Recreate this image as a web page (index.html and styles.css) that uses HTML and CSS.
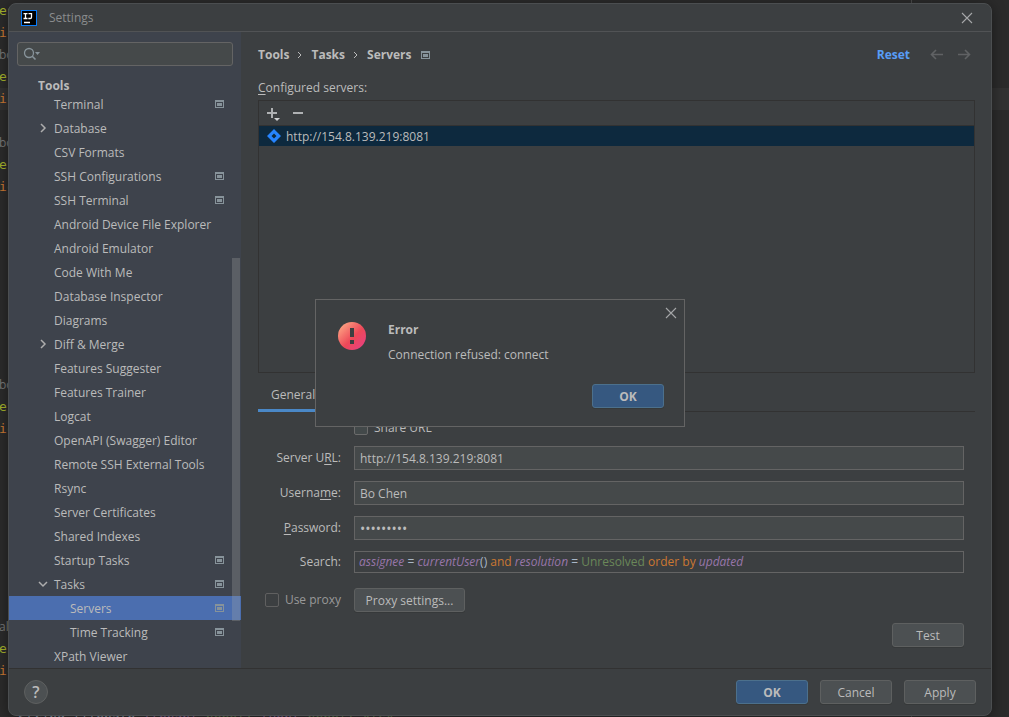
FILE: index.html
```html
<!DOCTYPE html>
<html lang="en">
<head>
<meta charset="utf-8">
<title>Settings</title>
<link rel="stylesheet" href="styles.css">
</head>
<body>
<svg width="0" height="0" class="defs" aria-hidden="true">
  <symbol id="project" viewBox="0 0 9 8"><path fill-rule="evenodd" fill="#87939a" d="M0 0h9v8H0zM1 2v5h7V2z"/><path fill="#87939a" d="M2 3h5v3H2z"/></symbol>
  <symbol id="right" viewBox="0 0 8 10"><path d="M2 1l4 4-4 4" fill="none" stroke="#adadad" stroke-width="1.5"/></symbol>
  <symbol id="down" viewBox="0 0 10 8"><path d="M1 2l4 4 4-4" fill="none" stroke="#adadad" stroke-width="1.5"/></symbol>
  <symbol id="close" viewBox="0 0 12 12"><path d="M1 1l10 10M11 1L1 11" fill="none" stroke="#a5a7a8" stroke-width="1.1"/></symbol>
</svg>

<div class="editor" aria-hidden="true">
  <div class="caret-line"></div>
  <pre class="gutter"><span class="y">es</span>
<span class="o">ic</span>
<span class="g">bo</span>
<span class="y">es</span>
<span class="o">ic</span>

<span class="g">bo</span>
<span class="y">es</span>
<span class="o">ic</span>








<span class="g">bo</span>
<span class="y">es</span>
<span class="o">ic</span>








<span class="g">ali</span>
<span class="y">es</span>
<span class="o">ic</span></pre>
  <div class="margin-line"></div>
  <pre class="last-line">String filepath=<span class="p">{tenant</span><span class="s">_nebel}</span>.<span class="p">tuent</span><span class="s">_nebel}.xlsx</span></pre>
</div>

<main class="window">
  <header class="titlebar">
    <svg class="logo" viewBox="0 0 16 16" aria-hidden="true"><rect x=".5" y=".5" width="15" height="15" fill="#000" stroke="#087cfa"/><path d="M2.500 3.600h4M4.500 3.600v5M2.500 8.500h4M7.500 3.600h3v3.600q0 1.300-1.300 1.300H7.300M3 12.500h6" fill="none" stroke="#fff" stroke-width="1.300"/></svg>
    <h1>Settings</h1>
    <button class="icon-button" aria-label="Close settings"><svg width="12" height="12"><use href="#close"/></svg></button>
  </header>

  <div class="content">
    <aside class="sidebar">
      <label class="search">
        <svg width="18" height="14" viewBox="0 0 18 14" aria-hidden="true"><circle cx="6" cy="6" r="4.500" fill="none" stroke="#87939a" stroke-width="1.300"/><path d="M9 9l3.500 3.500" stroke="#87939a" stroke-width="1.600"/><path d="M12 5h5l-2.500 3z" fill="#87939a"/></svg>
        <input type="search" aria-label="Search settings">
      </label>
      <nav class="tree" aria-label="Settings sections">
        <h2>Tools</h2>
        <ul>
          <li><a href="#">Terminal</a><svg class="mark"><use href="#project"/></svg></li>
          <li><svg class="arrow"><use href="#right" width="8" height="10" x="2"/></svg><a href="#">Database</a></li>
          <li><a href="#">CSV Formats</a></li>
          <li><a href="#">SSH Configurations</a><svg class="mark"><use href="#project"/></svg></li>
          <li><a href="#">SSH Terminal</a><svg class="mark"><use href="#project"/></svg></li>
          <li><a href="#">Android Device File Explorer</a></li>
          <li><a href="#">Android Emulator</a></li>
          <li><a href="#">Code With Me</a></li>
          <li><a href="#">Database Inspector</a></li>
          <li><a href="#">Diagrams</a></li>
          <li><svg class="arrow"><use href="#right" width="8" height="10" x="2"/></svg><a href="#">Diff &amp; Merge</a></li>
          <li><a href="#">Features Suggester</a></li>
          <li><a href="#">Features Trainer</a></li>
          <li><a href="#">Logcat</a></li>
          <li><a href="#">OpenAPI (Swagger) Editor</a></li>
          <li><a href="#">Remote SSH External Tools</a></li>
          <li><a href="#">Rsync</a></li>
          <li><a href="#">Server Certificates</a></li>
          <li><a href="#">Shared Indexes</a></li>
          <li><a href="#">Startup Tasks</a><svg class="mark"><use href="#project"/></svg></li>
          <li><svg class="arrow"><use href="#down" width="10" height="8" x="1" y="1"/></svg><a href="#">Tasks</a><svg class="mark"><use href="#project"/></svg></li>
          <li class="child selected"><a href="#" aria-current="page">Servers</a><svg class="mark"><use href="#project"/></svg></li>
          <li class="child"><a href="#">Time Tracking</a><svg class="mark"><use href="#project"/></svg></li>
          <li><a href="#">XPath Viewer</a></li>
        </ul>
      </nav>
      <div class="thumb"></div>
    </aside>

    <section class="page">
      <div class="crumbs">
        <b>Tools</b><svg width="6" height="9"><path d="M1 1l3 3-3 3" fill="none" stroke="#bbb"/></svg>
        <b>Tasks</b><svg width="6" height="9"><path d="M1 1l3 3-3 3" fill="none" stroke="#bbb"/></svg>
        <b>Servers</b><svg class="crumb-mark" width="9" height="8"><use href="#project"/></svg>
        <a class="reset" href="#">Reset</a>
        <button class="icon-button" aria-label="Back"><svg width="14" height="12"><path d="M6 1L1.500 5.500 6 10M1.500 5.500H13" fill="none" stroke="#606264" stroke-width="1.600"/></svg></button>
        <button class="icon-button" aria-label="Forward"><svg width="14" height="12"><path d="M8 1l4.500 4.500L8 10M12.500 5.500H1" fill="none" stroke="#606264" stroke-width="1.600"/></svg></button>
      </div>
      <h2 class="list-title"><u>C</u>onfigured servers:</h2>
      <div class="list">
        <div class="toolbar">
          <button class="icon-button" aria-label="Add"><svg width="14" height="14"><path d="M5 1v10M0 6h10" stroke="#afb1b3" stroke-width="2"/><path d="M7 11h6l-3 3z" fill="#d0d2d4"/></svg></button>
          <button class="icon-button" aria-label="Remove"><svg width="10" height="12"><path d="M0 5h10" stroke="#afb1b3" stroke-width="2"/></svg></button>
        </div>
        <ul>
          <li><svg width="14" height="14" viewBox="0 0 14 14" aria-hidden="true"><path fill="#2684ff" fill-rule="evenodd" d="M7 0l7 7-7 7-7-7zM7 4.500L4.500 7 7 9.500 9.500 7z"/></svg><span>http://154.8.139.219:8081</span></li>
        </ul>
      </div>
      <div class="tabs" role="tablist"><button role="tab" aria-selected="true">General</button></div>
      <form class="form">
        <label class="check share"><input type="checkbox">Share URL</label>
        <label for="url">Server U<u>R</u>L:</label><input id="url" type="text" value="http://154.8.139.219:8081">
        <label for="user">Userna<u>m</u>e:</label><input id="user" type="text" value="Bo Chen">
        <label for="pass"><u>P</u>assword:</label><input id="pass" type="password" value="password1">
        <span class="label" id="query-label">Search:</span>
        <div class="query" role="textbox" contenteditable="true" spellcheck="false" aria-labelledby="query-label"><i>assignee</i> = <i>currentUser</i>() <span class="keyword">and</span> <i>resolution</i> = <span class="string">Unresolved</span> <span class="keyword">order by</span> <i>updated</i></div>
        <label class="check proxy"><input type="checkbox" disabled>Use proxy</label>
        <button type="button" class="button proxy-button">Proxy settings...</button>
        <button type="button" class="button test">Test</button>
      </form>
    </section>
  </div>

  <footer>
    <button class="help" aria-label="Help">?</button>
    <button class="button primary">OK</button>
    <button class="button">Cancel</button>
    <button class="button">Apply</button>
  </footer>

  <div class="overlay">
    <section class="error" role="alertdialog" aria-labelledby="error-title">
      <svg width="28" height="28" viewBox="0 0 28 28" aria-hidden="true"><defs><linearGradient id="red" x1="0" y1="0" x2="1" y2="1"><stop offset=".1" stop-color="#fda383"/><stop offset=".55" stop-color="#ed4858"/><stop offset=".9" stop-color="#e8417e"/></linearGradient></defs><circle cx="14" cy="14" r="14" fill="url(#red)"/><path d="M12 6h4v9h-4zM12 18h4v4h-4z" fill="#3c3f41"/></svg>
      <div class="message">
        <h2 id="error-title">Error</h2>
        <p>Connection refused: connect</p>
      </div>
      <button class="icon-button dismiss" aria-label="Close error"><svg width="12" height="12"><use href="#close"/></svg></button>
      <button class="button primary">OK</button>
    </section>
  </div>
</main>
</body>
</html>
```
FILE: styles.css
```css
* { box-sizing: border-box; }
body {
  margin: 0;
  height: 100vh;
  overflow: hidden;
  position: relative;
  background: #2b2b2b;
  color: #bbbbbb;
  font: 12px/16px "Open Sans", "Noto Sans", sans-serif;
}
h1, h2, p, ul, pre { margin: 0; padding: 0; font-size: 12px; }
ul { list-style: none; }
a { color: inherit; text-decoration: none; }
svg { display: block; flex: none; }
button, input { font: inherit; color: inherit; }
u { text-underline-offset: 2px; }
.defs { position: absolute; }

/* Code behind the window */
.editor { position: absolute; inset: 0; overflow: hidden; }
.editor pre { font: 13px/22px "DejaVu Sans Mono", monospace; position: absolute; }
.gutter { top: 0; left: -1px; }
.gutter .y { color: #a5b12c; }
.gutter .o { color: #cc7832; }
.gutter .g { color: #787878; font: 12px/22px "Open Sans", sans-serif; }
.caret-line { position: absolute; top: 88px; left: 0; right: 0; height: 22px; background: #323232; }
.margin-line { position: absolute; top: 0; left: 911px; width: 1px; height: 100%; background: #4b4b4b; }
.editor .last-line { top: 707px; left: 18px; color: #8797a8; }
.last-line .p { color: #806090; }
.last-line .s { color: #587048; }

.window {
  position: relative;
  display: flex;
  flex-direction: column;
  height: calc(100vh - 4px);
  margin: 0 17px 0 8px;
  top: 3px;
  background: #3c3f41;
  border: 1px solid #4b4e50;
  border-radius: 8px;
  box-shadow: 0 2px 14px #0006;
  overflow: hidden;
}
.icon-button { display: flex; padding: 0; border: 0; background: none; }
.titlebar {
  display: flex;
  align-items: center;
  height: 28px;
  padding: 0 18px 0 12px;
  border-bottom: 1px solid #515355;
}
.logo { width: 16px; height: 16px; }
.titlebar h1 { flex: 1; margin-left: 12px; color: #8a8c8d; font-weight: 400; }
.content { flex: 1; display: flex; min-height: 0; }

.sidebar {
  position: relative;
  width: 232px;
  flex: none;
  padding-top: 10px;
  background: #3e434c;
  overflow: hidden;
}
.search {
  display: flex;
  align-items: center;
  height: 24px;
  margin: 0 8px;
  padding-left: 5px;
  background: #45494a;
  border: 1px solid #646464;
  border-radius: 3px;
}
.search input { flex: 1; min-width: 0; border: 0; background: none; outline: 0; }
.tree { margin-top: 8px; }
.tree h2 { height: 18px; line-height: 24px; padding-left: 29px; }
.tree li { display: flex; align-items: center; height: 24px; padding: 0 17px 0 45px; }
.tree li.child { padding-left: 61px; }
.tree a { flex: 1; padding-top: 2px; }
.tree .mark { width: 9px; height: 8px; }
.tree .arrow { width: 13px; height: 10px; margin-left: -17px; margin-right: 4px; }
.tree .selected { background: #4b6eaf; }
.thumb { position: absolute; right: 1px; top: 226px; bottom: 47px; width: 8px; background: #a6a6a648; }

.page { flex: 1; min-width: 0; display: flex; flex-direction: column; padding: 14px 16px 21px 17px; }
.crumbs { display: flex; align-items: center; gap: 8px; height: 18px; }
.crumb-mark { margin-left: 1px; }
.crumbs b { font-weight: 700; }
.reset { margin-left: auto; margin-right: 12px; color: #589df6; font-weight: 700; }
.crumbs .icon-button + .icon-button { margin-left: 5px; }
.crumbs .icon-button:last-child { margin-right: 4px; }
.list-title { margin: 16px 0 4px; font-weight: 400; }
.list { flex: 1; border: 1px solid #323232; }
.toolbar { display: flex; align-items: center; gap: 12px; height: 25px; padding: 2px 0 0 8px; border-bottom: 1px solid #323232; }
.list li { display: flex; align-items: center; gap: 5px; height: 20px; padding-left: 8px; background: #0d293e; }
.list span { padding-top: 2px; }

.tabs { display: flex; height: 39px; border-bottom: 1px solid #323232; }
.tabs button { height: 39px; padding: 7px 13px 0; border: 0; border-bottom: 3px solid #4a88c7; background: none; }
.form {
  display: grid;
  grid-template-columns: 83px 1fr;
  grid-template-rows: 15px 24px 24px 24px 22px 28px 24px;
  gap: 11px 13px;
  align-items: center;
  margin-right: 11px;
  padding-top: 8px;
}
.form > label, .form .label { text-align: right; }
.form > input, .query {
  width: 100%;
  height: 24px;
  padding: 1px 5px 0;
  border: 1px solid #646464;
  background: #45494a;
  outline: 0;
}
.form > input[type="password"] { font-size: 14px; }
.query { height: 22px; line-height: 20px; padding: 0 4px; background: none; color: #a9b7c6; white-space: nowrap; overflow: hidden; }
.query i { color: #9876aa; }
.keyword { color: #cc7832; }
.string { color: #6a8759; }
.form .check { display: flex; align-items: center; gap: 6px; }
.check input { appearance: none; width: 14px; height: 14px; margin: 0; border: 1px solid #6b6b6b; border-radius: 2px; background: #43494a; }
.share { grid-column: 2; }
.form .proxy { justify-content: flex-end; align-self: end; height: 24px; color: #999999; white-space: nowrap; }
.form .check input:disabled { background: none; border-color: #606060; }

.button {
  width: 72px;
  height: 24px;
  padding: 2px 0 0;
  border: 1px solid #5e6060;
  border-radius: 3px;
  background: #4c5052;
  box-shadow: 0 1px 0 #36393a;
}
.button.primary { background: #365880; border-color: #4c708c; font-weight: 700; }
.proxy-button { width: 111px; align-self: end; }
.test { grid-column: 2; justify-self: end; }

footer { display: flex; align-items: center; gap: 12px; height: 47px; padding: 0 15px; border-top: 1px solid #323232; }
.help {
  width: 24px;
  height: 24px;
  margin-right: auto;
  padding: 0;
  border: 1px solid #5e6060;
  border-radius: 50%;
  background: #4c5052;
  font-size: 16px;
  font-weight: 600;
}

.overlay { position: absolute; inset: 0; padding-top: 6px; display: grid; place-items: center; }
.error {
  display: grid;
  grid-template-columns: 28px 1fr 12px;
  column-gap: 22px;
  width: 370px;
  height: 128px;
  padding: 22px 20px 18px 22px;
  border: 1px solid #646464;
  background: #3c3f41;
  position: relative;
}
.message h2 { margin-bottom: 9px; }
.dismiss { position: absolute; top: 7px; right: 7px; }
.error .button { grid-column: 1 / -1; justify-self: end; align-self: end; }
```
